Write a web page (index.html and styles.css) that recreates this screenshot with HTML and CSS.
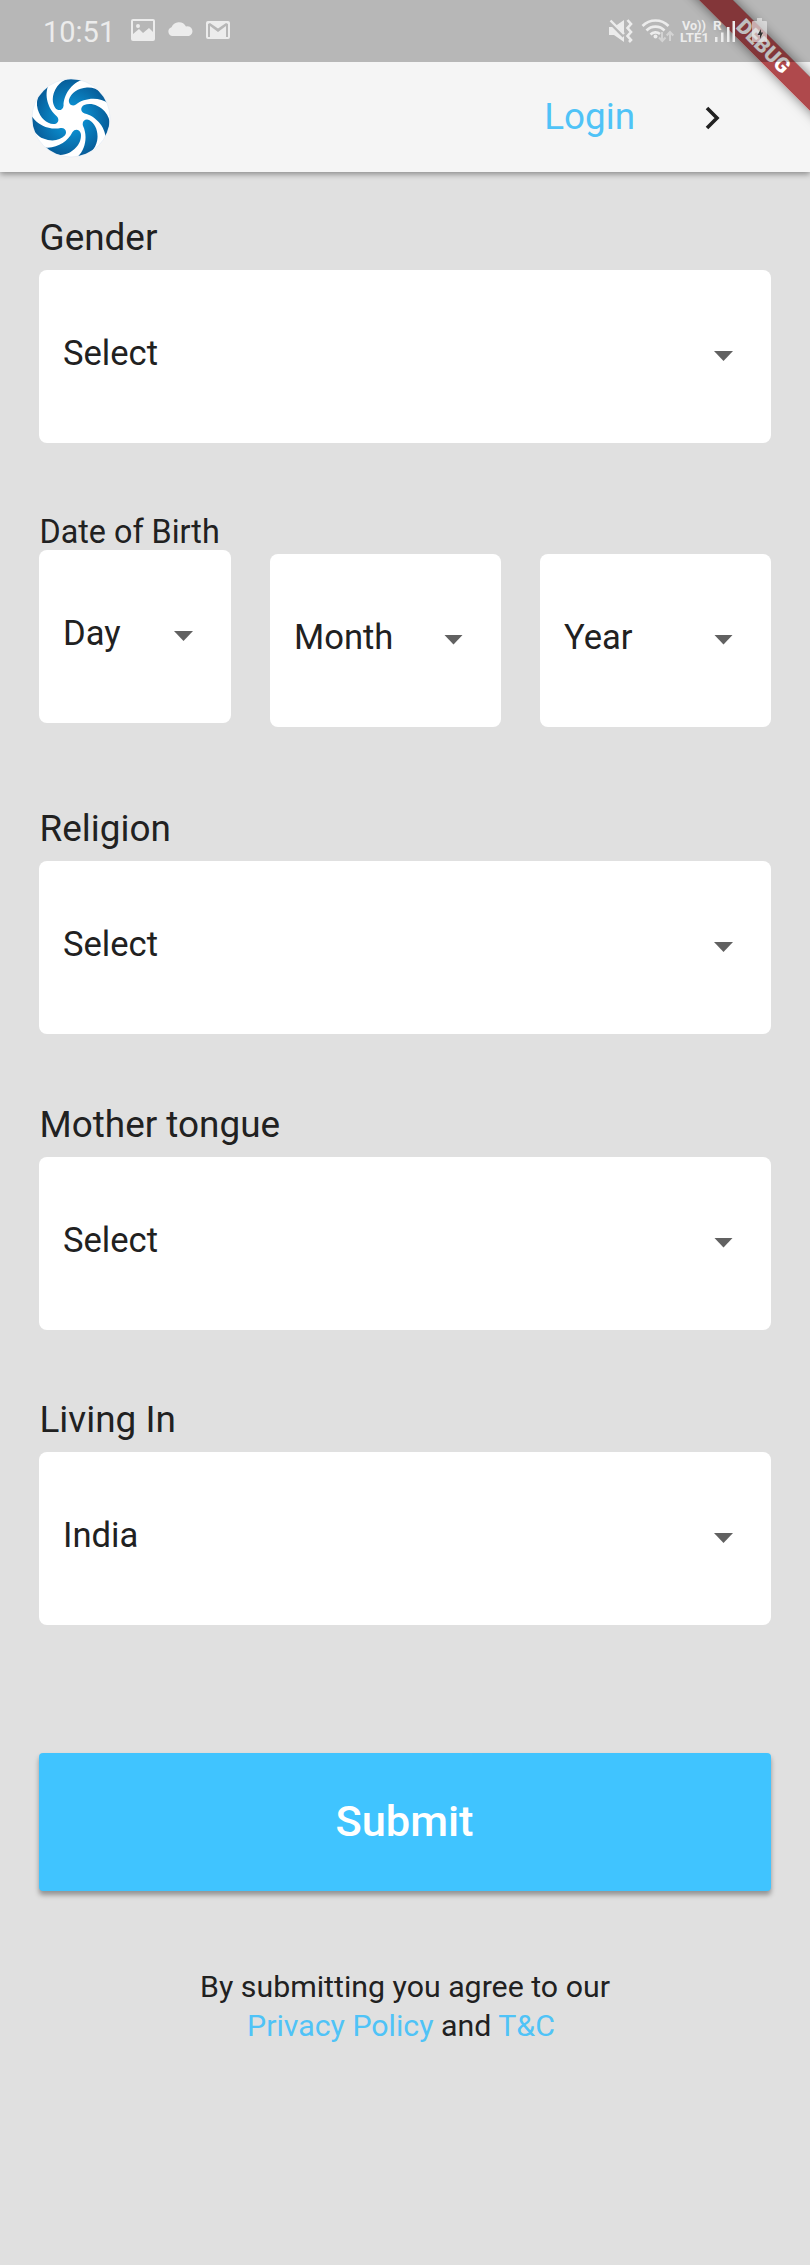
FILE: index.html
```html
<!DOCTYPE html>
<html lang="en">
<head>
<meta charset="utf-8">
<title>Registration</title>
<link rel="stylesheet" href="styles.css">
</head>
<body>
<div class="banner-clip"><div class="banner">DEBUG</div></div>
<div class="status">
  <span class="time">10:51</span>
  <svg class="notices" width="100" height="24" viewBox="0 0 100 24" fill="#ececec">
    <path fill-rule="evenodd" d="M2 0H22Q24 0 24 2V20Q24 22 22 22H2Q0 22 0 20V2Q0 0 2 0ZM2 2V15L8 10L12 14L18 9L22 13V2ZM5 7A2 2 0 1 0 9 7A2 2 0 1 0 5 7Z"/>
    <path d="M41 17A4.500 4.500 0 0 1 40.500 8.300A8 8 0 0 1 55 7.500A4.800 4.800 0 0 1 58 17Z"/>
    <path fill-rule="evenodd" d="M77 2H97Q99 2 99 4V18Q99 20 97 20H77Q75 20 75 18V4Q75 2 77 2ZM77 5V18H79V7L87 13L95 7V18H97V5L95 4L87 9.500L79 4Z"/>
  </svg>
  <svg class="signals" width="160" height="28" viewBox="0 0 160 28" fill="#ececec">
    <path d="M0 9H5L15 2V24L5 17H0Z"/>
    <path d="M0 3L15 18" stroke="#b7b7b7" stroke-width="4"/>
    <path d="M1.500 2.500L15 16" stroke="#ececec" stroke-width="2.400"/>
    <path d="M18.500 2L22 6L18.500 10L22 14L18.500 18L22 22L20 24" fill="none" stroke="#ececec" stroke-width="2.600"/>
    <g fill="none" stroke="#ececec" stroke-width="2.600"><path d="M33.500 8A18 18 0 0 1 59.500 8M37.500 12.500A12.500 12.500 0 0 1 55.500 12.500M41.500 16.500A7 7 0 0 1 51 16"/></g>
    <circle cx="46.500" cy="18.500" r="2"/>
    <path d="M53 14V23M50 19.500L53.300 23L56.500 19.500M61 23V15M57.700 17.500L61 14L64.300 17.500" fill="none" stroke="#d3d3d3" stroke-width="2"/>
    <text class="carrier" x="73" y="11.500" textLength="24" lengthAdjust="spacingAndGlyphs">Vo))</text>
    <text class="carrier" x="71" y="24" textLength="29" lengthAdjust="spacingAndGlyphs">LTE1</text>
    <text class="carrier" x="104" y="11.500">R</text>
    <path d="M106 19h2.500v5h-2.500zM112 14.500h2.500v9.500h-2.500zM118 9h2.500v15h-2.500zM123.500 3h2.500v21h-2.500z"/>
    <path opacity=".65" d="M148 0h5v3h4q1 0 1 1v19q0 1-1 1h-13q-1 0-1-1v-19q0-1 1-1h4z"/>
    <path fill="#333" d="M152 11L148.500 17H151V21L154 14.500H152Z"/>
  </svg>
</div>
<header class="appbar">
  <svg class="logo" width="80" height="80" viewBox="-40 -40 80 80">
    <defs>
      <radialGradient id="water" gradientUnits="userSpaceOnUse" cx="0" cy="0" r="39"><stop offset=".3" stop-color="#0b8fd0"/><stop offset="1" stop-color="#075c98"/></radialGradient>
      <path id="blade" d="M38 -14C35 -23 27 -31 16 -30.500C7 -30 0 -25 -2 -18.500C-3 -14 1 -11 5 -13.500C13 -20 28 -22 38 -14Z"/>
      <clipPath id="disc"><circle r="38.700"/></clipPath>
    </defs>
    <circle r="39" fill="#fff" stroke="#dfe9f5" stroke-width=".6"/>
    <g fill="url(#water)" clip-path="url(#disc)">
      <use href="#blade"/><use href="#blade" transform="rotate(51.430)"/><use href="#blade" transform="rotate(102.860)"/><use href="#blade" transform="rotate(154.290)"/><use href="#blade" transform="rotate(205.710)"/><use href="#blade" transform="rotate(257.140)"/><use href="#blade" transform="rotate(308.570)"/>
    </g>
  </svg>
  <a class="login">Login</a>
  <svg class="next" width="16" height="24" viewBox="0 0 16 24"><path d="M2 2L12 12L2 22" fill="none" stroke="#212121" stroke-width="3.600"/></svg>
</header>
<main class="form">
  <section class="field"><label class="label">Gender</label><div class="select">Select<i class="caret"></i></div></section>
  <section class="birth">
    <div class="day"><label class="label small">Date of Birth</label><div class="select">Day<i class="caret"></i></div></div>
    <div class="select">Month<i class="caret"></i></div>
    <div class="select">Year<i class="caret"></i></div>
  </section>
  <section class="field"><label class="label">Religion</label><div class="select">Select<i class="caret"></i></div></section>
  <section class="field"><label class="label">Mother tongue</label><div class="select">Select<i class="caret"></i></div></section>
  <section class="field"><label class="label">Living In</label><div class="select">India<i class="caret"></i></div></section>
  <button class="submit">Submit</button>
  <p class="terms">By submitting you agree to our<br><a>Privacy Policy</a> and <a class="tc">T&amp;C</a></p>
</main>
</body>
</html>
```

FILE: styles.css
```css
* { box-sizing: border-box; }
body {
  margin: 0;
  height: 2265px;
  position: relative;
  background: #e0e0e0;
  color: #212121;
  font-family: Roboto, sans-serif;
  overflow-x: hidden;
}
.status {
  position: relative;
  z-index: 3;
  height: 62px;
  padding: 18px 41px 0 43px;
  display: flex;
  align-items: flex-start;
  background: rgba(0, 0, 0, .25);
}
.time { font-size: 29px; line-height: 28px; width: 88px; color: #ececec; }
.notices { margin-top: 1px; }
.signals { margin-left: auto; }
.carrier { font: 700 13.5px Roboto, sans-serif; }
.appbar {
  height: 172px;
  margin-top: -62px;
  padding: 62px 89px 0 31px;
  display: flex;
  align-items: center;
  background: #f5f5f5;
  box-shadow: 0 2px 6px rgba(0, 0, 0, .4);
}
.logo { margin-top: 1px; }
.login {
  margin-left: auto;
  margin-right: 70px;
  font-size: 36.8px;
  line-height: 44px;
  color: #4fc3f7;
}
.next { margin-top: 1px; }
.banner-clip {
  position: absolute;
  z-index: 2;
  top: 0;
  right: 0;
  width: 180px;
  height: 180px;
  overflow: hidden;
}
.banner {
  position: absolute;
  left: 13px;
  top: 35px;
  width: 240px;
  height: 23.6px;
  transform: rotate(45deg);
  background: rgba(150, 12, 16, .74);
  box-shadow: 0 0 12px rgba(0, 0, 0, .5);
  color: #fff;
  text-align: center;
  font-size: 20.8px;
  line-height: 23.6px;
  font-weight: 900;
}
.form { padding: 45px 39px 0; }
.field { height: 295.5px; }
.label { display: block; height: 53px; padding-left: .5px; font-size: 36.9px; line-height: 41px; }
.small { height: 37.5px; font-size: 32.3px; line-height: 38px; }
.select {
  height: 173px;
  padding: 0 38px 7px 24px;
  display: flex;
  align-items: center;
  justify-content: space-between;
  background: #fff;
  border-radius: 8px;
  font-size: 34.6px;
}
.caret {
  width: 19px;
  height: 10px;
  margin-top: 6px;
  background: #616161;
  clip-path: polygon(0 0, 100% 0, 50% 100%);
}
.birth {
  height: 295.5px;
  display: grid;
  grid-template-columns: 192px 231px 231px;
  gap: 39px;
  align-items: start;
}
.birth > .select { margin-top: 41px; }
.submit {
  display: block;
  width: 100%;
  height: 138px;
  margin-top: 58.5px;
  padding: 0 1px 1px 0;
  border: 0;
  border-radius: 4px;
  background: #40c4ff;
  color: #fff;
  font: 500 43.4px/137px Roboto, sans-serif;
  box-shadow: 0 4px 5px rgba(0, 0, 0, .35);
}
.terms { margin: 76px 0 0; text-align: center; font-size: 30.3px; line-height: 39px; }
.terms a { color: #4fc3f7; }
.tc { padding-right: 8px; }
```
